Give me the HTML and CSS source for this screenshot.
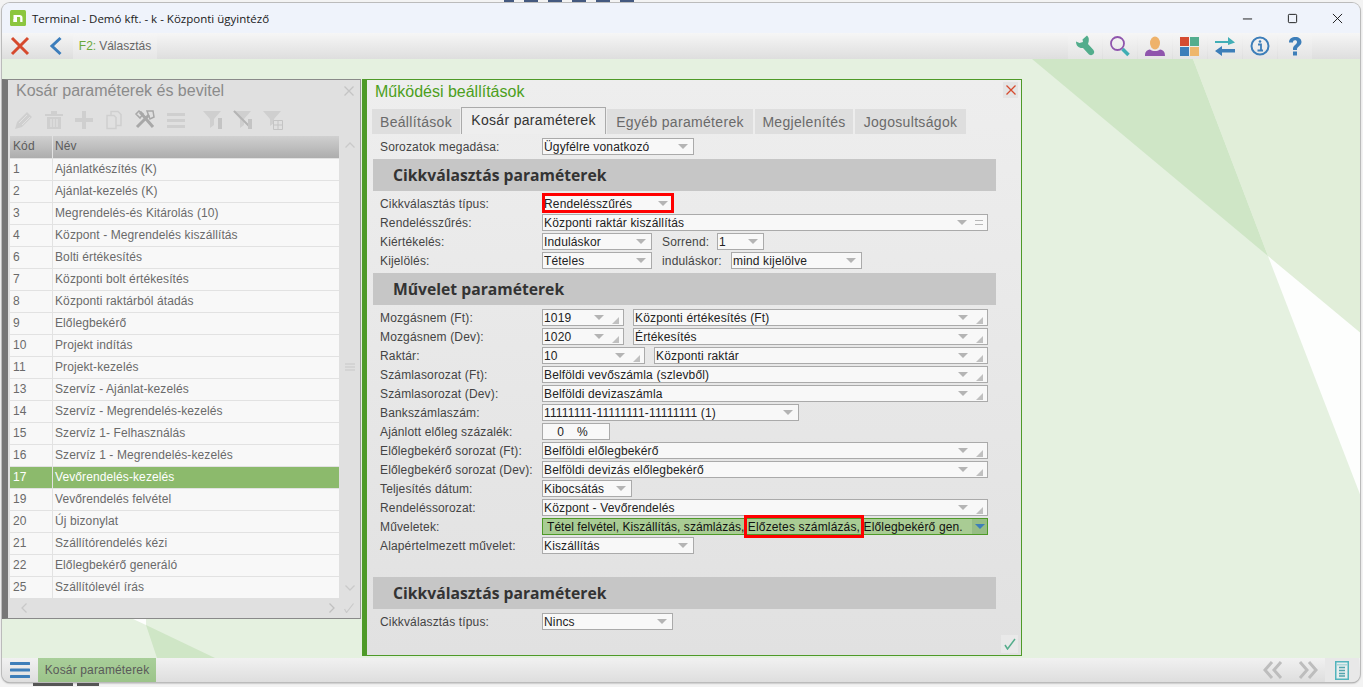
FILE: index.html
```html
<!DOCTYPE html>
<html lang="hu">
<head>
<meta charset="utf-8">
<title>Terminal</title>
<link rel="stylesheet" href="styles.css">
</head>
<body>
<div class="desk-top"><i class="tick t-a"></i><i class="tick t-b"></i><i class="tick"></i><i class="tick"></i><i class="tick"></i><i class="tick"></i></div>
<div class="window">
  <header class="titlebar">
    <svg class="logo" viewBox="0 0 16 16"><rect width="16" height="16" rx="1.5" fill="#8cc63f"/><path d="M3.500 12V5h6.200c1.600 0 2.800 1 2.800 2.800V12h-2.300V8c0-.6-.3-1-1-1H7v5z" fill="#fff"/><rect x="3.500" y="9" width="2" height="3" fill="#fff"/></svg>
    <span class="title-text">Terminal - Demó kft. - k - Központi ügyintéző</span>
    <div class="win-ctrls">
      <svg viewBox="0 0 12 12"><path d="M1 6.500h10" stroke="#111" fill="none"/></svg>
      <svg viewBox="0 0 12 12"><rect x="1.500" y="1.500" width="9" height="9" rx="1" stroke="#111" fill="none"/></svg>
      <svg viewBox="0 0 12 12"><path d="M1 1l10 10M11 1L1 11" stroke="#111" fill="none"/></svg>
    </div>
  </header>
  <nav class="toolbar">
    <button class="tb-btn tb-close"><svg viewBox="0 0 20 20" width="20" height="20"><path d="M2 2l16 16M18 2L2 18" stroke="#d64a2e" stroke-width="3" fill="none"/></svg></button>
    <button class="tb-btn tb-back"><svg viewBox="0 0 14 20" width="14" height="20"><path d="M11.500 2L3 10l8.500 8" stroke="#3d7ebc" stroke-width="3" fill="none"/></svg></button>
    <button class="tb-btn tb-f2"><span class="f2-key">F2:</span> Választás</button>
    <div class="tb-right">
      <button class="tb-icon"><svg viewBox="0 0 22 22" width="22" height="22"><path d="M13 .5L8.500 4.500 9 7 5.500 8 2 6.500C2 11 5 13.500 9 13l6 6.500q2.500 1.500 4.500-.5 1.500-2 0-4L14 9c1.500-4 1-7-1-8.500z" fill="#52ad8c"/></svg></button>
      <button class="tb-icon"><svg viewBox="0 0 22 22" width="22" height="22"><circle cx="8.500" cy="8.500" r="6.500" fill="none" stroke="#8f55ad" stroke-width="1.800"/><path d="M13.500 14l6 6" stroke="#3eaeb4" stroke-width="3.500"/></svg></button>
      <button class="tb-icon"><svg viewBox="0 0 22 22" width="22" height="22"><ellipse cx="11" cy="8" rx="5" ry="6.500" fill="#eeb26a"/><path d="M1 21c0-4 1.500-6 5-6.500 3 2 7 2 10 0 3.500.5 5 2.500 5 6.500z" fill="#8f55ad"/></svg></button>
      <button class="tb-icon"><svg viewBox="0 0 22 22" width="22" height="22"><rect x="1" y="2" width="9" height="9" fill="#d54b30"/><rect x="11" y="2" width="9" height="9" fill="#54ad8e"/><rect x="1" y="12" width="9" height="9" fill="#3d7eb9"/><rect x="11" y="12" width="9" height="9" fill="#eeb66c"/></svg></button>
      <button class="tb-icon"><svg viewBox="0 0 22 22" width="22" height="22"><path d="M1 6h13V2l7 5.500-7 2.500V8H1z" fill="#41aeb6"/><path d="M21 14H8v-3L1 16l7 5v-3.500h13z" fill="#3d7eb9"/></svg></button>
      <button class="tb-icon"><svg viewBox="0 0 22 22" width="22" height="22"><circle cx="11" cy="11" r="8.500" fill="none" stroke="#3d7eb9" stroke-width="2"/><path d="M9 9.500h3V15M8.500 15.500h5.500" stroke="#3d7eb9" stroke-width="1.800" fill="none"/><circle cx="11" cy="6.500" r="1.300" fill="#3d7eb9"/></svg></button>
      <button class="tb-icon"><svg viewBox="0 0 22 22" width="22" height="22"><path d="M5 7.500C5 3.500 8 2 11.500 2 15 2 17.500 4 17.500 7c0 4-5 4.500-4.500 8H9c-.5-5 4-5 4-8 0-1.200-.7-1.800-2-1.800S9 6 9 7.500z" fill="#3d7eb9"/><rect x="9" y="16.500" width="4" height="4" fill="#3d7eb9"/></svg></button>
    </div>
  </nav>
  <main class="content">
    <svg class="wallpaper" viewBox="0 0 1363 687" preserveAspectRatio="none">
      <polygon points="1032,59 1193,59 1268,256" fill="#cfe6c6"/>
      <polygon points="1193,59 1363,59 1363,335 1268,256" fill="#e1eed9"/>
      <polygon points="1268,256 1363,335 1363,502" fill="#fdfefd"/>
      <polygon points="133,619 146,619 146,625" fill="#fdfefd"/>
      <polygon points="146,625 215,658 157,658" fill="#cfe6c6"/>
    </svg>

    <section class="list-panel">
      <div class="lp-title"><span>Kosár paraméterek és bevitel</span>
        <svg class="lp-x" viewBox="0 0 10 10" width="10" height="10"><path d="M.5.500l9 9M9.500.500l-9 9" stroke="#c4c4c4" stroke-width="1.300"/></svg>
      </div>
      <div class="lp-tools">
        <svg viewBox="0 0 20 20" width="20" height="20"><path d="M1 19l2-7L13 2l5 5L8 17z" fill="#cfcfcf"/><path d="M5 13l8-8M8 15l8-8" stroke="#e0e0e0"/></svg>
        <svg viewBox="0 0 20 20" width="20" height="20"><path d="M1 4h18v2H1zM7 1h6v3H7z" fill="#cfcfcf"/><path d="M3 7h14v12H3z" fill="#cfcfcf"/><path d="M7 9v8M10 9v8M13 9v8" stroke="#e0e0e0" stroke-width="1.300"/></svg>
        <svg viewBox="0 0 20 20" width="20" height="20"><path d="M8 1h4v7h7v4h-7v7H8v-7H1V8h7z" fill="#cfcfcf"/></svg>
        <svg viewBox="0 0 20 20" width="20" height="20"><path d="M7 1.500h7l3 3v11H7z" fill="none" stroke="#cfcfcf" stroke-width="1.500"/><path d="M3 5.500h7l2 2v11H3z" fill="#e0e0e0" stroke="#cfcfcf" stroke-width="1.500"/></svg>
        <svg viewBox="0 0 22 22" width="22" height="22"><path d="M3 18L15 6M6 3l13 15" stroke="#a8a8a8" stroke-width="3" fill="none"/><path d="M2 5l3-3 4 3-3 4zM13 2h6l1 6-4 2z" fill="none" stroke="#a8a8a8" stroke-width="1.500"/></svg>
        <svg viewBox="0 0 20 20" width="20" height="20"><path d="M1 3h18v3H1zM1 9h18v3H1zM1 15h18v3H1z" fill="#cfcfcf"/></svg>
        <svg class="tool-gap" viewBox="0 0 20 20" width="20" height="20"><path d="M0 1h18l-7 8v6l-4 3V9z" fill="#cfcfcf"/><path d="M15 8v11h4V8z" fill="#c4c4c4"/></svg>
        <svg viewBox="0 0 20 20" width="20" height="20"><path d="M0 1h18l-7 8v6l-4 3V9z" fill="#cfcfcf"/><path d="M1 1l17 17" stroke="#b4b4b4" stroke-width="2"/><path d="M15 9v10h4V9z" fill="#c4c4c4"/></svg>
        <svg viewBox="0 0 20 20" width="20" height="20"><path d="M0 1h18l-7 8v4l-4 3V9z" fill="#cfcfcf"/><path d="M10.500 10.500h9v9h-9zM15 11v8M11 15h8" fill="#e0e0e0" stroke="#c4c4c4"/></svg>
      </div>
      <div class="lp-body">
        <div class="table">
          <div class="t-head"><span>Kód</span><span>Név</span></div>
          <div class="t-row"><span>1</span><span>Ajánlatkészítés (K)</span></div>
          <div class="t-row"><span>2</span><span>Ajánlat-kezelés (K)</span></div>
          <div class="t-row"><span>3</span><span>Megrendelés-és Kitárolás (10)</span></div>
          <div class="t-row"><span>4</span><span>Központ - Megrendelés kiszállítás</span></div>
          <div class="t-row"><span>6</span><span>Bolti értékesítés</span></div>
          <div class="t-row"><span>7</span><span>Központi bolt értékesítés</span></div>
          <div class="t-row"><span>8</span><span>Központi raktárból átadás</span></div>
          <div class="t-row"><span>9</span><span>Előlegbekérő</span></div>
          <div class="t-row"><span>10</span><span>Projekt indítás</span></div>
          <div class="t-row"><span>11</span><span>Projekt-kezelés</span></div>
          <div class="t-row"><span>13</span><span>Szervíz - Ajánlat-kezelés</span></div>
          <div class="t-row"><span>14</span><span>Szervíz - Megrendelés-kezelés</span></div>
          <div class="t-row"><span>15</span><span>Szervíz 1- Felhasználás</span></div>
          <div class="t-row"><span>16</span><span>Szervíz 1 - Megrendelés-kezelés</span></div>
          <div class="t-row t-sel"><span>17</span><span>Vevőrendelés-kezelés</span></div>
          <div class="t-row"><span>19</span><span>Vevőrendelés felvétel</span></div>
          <div class="t-row"><span>20</span><span>Új bizonylat</span></div>
          <div class="t-row"><span>21</span><span>Szállítórendelés kézi</span></div>
          <div class="t-row"><span>22</span><span>Előlegbekérő generáló</span></div>
          <div class="t-row"><span>25</span><span>Szállítólevél írás</span></div>
        </div>
        <div class="v-scroll">
          <svg viewBox="0 0 10 6" width="10" height="6"><path d="M.5 5.500L5 1l4.500 4.500" stroke="#cacaca" stroke-width="1.300" fill="none"/></svg>
          <svg viewBox="0 0 10 8" width="10" height="8"><path d="M0 1h10M0 4h10M0 7h10" stroke="#c8c8c8"/></svg>
          <svg viewBox="0 0 10 6" width="10" height="6"><path d="M.5.500L5 5 9.500.500" stroke="#cacaca" stroke-width="1.300" fill="none"/></svg>
        </div>
      </div>
      <div class="lp-foot">
        <svg viewBox="0 0 6 10" width="6" height="10"><path d="M5.500.500L1 5l4.500 4.500" stroke="#c8c8c8" stroke-width="1.300" fill="none"/></svg>
        <svg viewBox="0 0 6 10" width="6" height="10"><path d="M.5.500L5 5 .5 9.500" stroke="#c0c0c0" stroke-width="1.300" fill="none"/></svg>
        <svg viewBox="0 0 10 10" width="10" height="10"><path d="M.5 6l2 3.500L9.500.500" stroke="#cacaca" stroke-width="1.200" fill="none"/></svg>
      </div>
    </section>

    <section class="form-panel">
      <div class="fp-head">
        <h1 class="fp-title">Működési beállítások</h1>
        <button class="fp-close"><svg viewBox="0 0 10 10" width="10" height="10"><path d="M.5.500l9 9M9.500.500l-9 9" stroke="#d64a2e" stroke-width="1.300"/></svg></button>
      </div>
      <div class="tabs">
        <div class="tab tab-a">Beállítások</div>
        <div class="tab tab-on">Kosár paraméterek</div>
        <div class="tab tab-c">Egyéb paraméterek</div>
        <div class="tab tab-d">Megjelenítés</div>
        <div class="tab tab-e">Jogosultságok</div>
      </div>
      <div class="form">
        <div class="row"><label>Sorozatok megadása:</label><div class="sel w152"><span class="val">Ügyfélre vonatkozó</span><i class="caret"></i></div></div>
        <h2 class="sect">Cikkválasztás paraméterek</h2>
        <div class="row"><label>Cikkválasztás típus:</label><div class="sel w132 marked"><span class="val">Rendelésszűrés</span><i class="caret"></i></div></div>
        <div class="row"><label>Rendelésszűrés:</label><div class="sel grow"><span class="val">Központi raktár kiszállítás</span><i class="caret"></i><i class="eq"></i></div></div>
        <div class="row"><label>Kiértékelés:</label><div class="sel w110"><span class="val">Induláskor</span><i class="caret"></i></div><span class="sub s55">Sorrend:</span><div class="sel w47"><span class="val">1</span><i class="caret"></i></div></div>
        <div class="row"><label>Kijelölés:</label><div class="sel w110"><span class="val">Tételes</span><i class="caret"></i></div><span class="sub s69">induláskor:</span><div class="sel w131"><span class="val">mind kijelölve</span><i class="caret"></i></div></div>
        <h2 class="sect">Művelet paraméterek</h2>
        <div class="row"><label>Mozgásnem (Ft):</label><div class="sel w82"><span class="val">1019</span><i class="caret"></i><i class="grip"></i></div><div class="sel grow ml9"><span class="val">Központi értékesítés (Ft)</span><i class="caret"></i><i class="grip"></i></div></div>
        <div class="row"><label>Mozgásnem (Dev):</label><div class="sel w82"><span class="val">1020</span><i class="caret"></i><i class="grip"></i></div><div class="sel grow ml9"><span class="val">Értékesítés</span><i class="caret"></i><i class="grip"></i></div></div>
        <div class="row"><label>Raktár:</label><div class="sel w103"><span class="val">10</span><i class="caret"></i><i class="grip"></i></div><div class="sel grow ml9"><span class="val">Központi raktár</span><i class="caret"></i><i class="grip"></i></div></div>
        <div class="row"><label>Számlasorozat (Ft):</label><div class="sel grow"><span class="val">Belföldi vevőszámla (szlevből)</span><i class="caret"></i><i class="grip"></i></div></div>
        <div class="row"><label>Számlasorozat (Dev):</label><div class="sel grow"><span class="val">Belföldi devizaszámla</span><i class="caret"></i><i class="grip"></i></div></div>
        <div class="row"><label>Bankszámlaszám:</label><div class="sel w257"><span class="val">11111111-11111111-11111111 (1)</span><i class="caret"></i></div></div>
        <div class="row"><label>Ajánlott előleg százalék:</label><div class="sel w68 pct"><span class="num">0</span><span>%</span></div></div>
        <div class="row"><label>Előlegbekérő sorozat (Ft):</label><div class="sel grow"><span class="val">Belföldi előlegbekérő</span><i class="caret"></i><i class="grip"></i></div></div>
        <div class="row"><label>Előlegbekérő sorozat (Dev):</label><div class="sel grow"><span class="val">Belföldi devizás előlegbekérő</span><i class="caret"></i><i class="grip"></i></div></div>
        <div class="row"><label>Teljesítés dátum:</label><div class="sel w90"><span class="val">Kibocsátás</span><i class="caret"></i></div></div>
        <div class="row"><label>Rendeléssorozat:</label><div class="sel grow"><span class="val">Központ - Vevőrendelés</span><i class="caret"></i><i class="grip"></i></div></div>
        <div class="row"><label>Műveletek:</label><div class="sel grow multi"><span class="val"><span class="tok1">Tétel felvétel, Kiszállítás, számlázás,</span> <span class="tok-mark">Előzetes számlázás,</span> <span class="tok3">Előlegbekérő gen.</span></span><i class="caret-blue"></i></div></div>
        <div class="row"><label>Alapértelmezett művelet:</label><div class="sel w152"><span class="val">Kiszállítás</span><i class="caret"></i></div></div>
        <div class="spacer"></div>
        <h2 class="sect">Cikkválasztás paraméterek</h2>
        <div class="row"><label>Cikkválasztás típus:</label><div class="sel w131"><span class="val">Nincs</span><i class="caret"></i></div></div>
      </div>
      <button class="fp-ok"><svg viewBox="0 0 12 12" width="12" height="12"><path d="M1 7l2.500 4L11 1" stroke="#55ad8c" stroke-width="1.500" fill="none"/></svg></button>
    </section>
  </main>
  <footer class="bottombar">
    <button class="bb-menu"><svg viewBox="0 0 20 16" width="20" height="16"><path d="M1 0h18a1 1 0 0 1 0 3H1a1 1 0 0 1 0-3zM1 6.500h18a1 1 0 0 1 0 3H1a1 1 0 0 1 0-3zM1 13h18a1 1 0 0 1 0 3H1a1 1 0 0 1 0-3z" fill="#3d7eb9"/></svg></button>
    <div class="bb-tab">Kosár paraméterek</div>
    <div class="bb-right">
      <svg viewBox="0 0 20 18" width="20" height="18"><path d="M9 1L2 9l7 8M18 1l-7 8 7 8" stroke="#bdbdbd" stroke-width="3" fill="none"/></svg>
      <svg viewBox="0 0 20 18" width="20" height="18"><path d="M2 1l7 8-7 8M11 1l7 8-7 8" stroke="#bdbdbd" stroke-width="3" fill="none"/></svg>
      <button class="bb-doc"><svg viewBox="0 0 14 19" width="14" height="19"><rect width="14" height="19" fill="#52b4bc"/><rect x="1.500" y="1.500" width="11" height="16" fill="#e6eeee"/><path d="M2 3h10v1.500H2z" fill="#52b4bc" opacity=".4"/><path d="M4 6.500h6M4 9.500h6M4 12.500h6M4 15h6" stroke="#52a4ac" stroke-width="1.300"/></svg></button>
    </div>
  </footer>
</div>
<div class="desk-bottom"><i class="tick-b"></i><i class="tick-b short"></i></div>
</body>
</html>
```

FILE: styles.css
```css
* { box-sizing: border-box; }
html, body { height: 100%; margin: 0; }
body {
  display: flex;
  flex-direction: column;
  overflow: hidden;
  background: #f3f3f3;
  font-family: "Liberation Sans", Arial, sans-serif;
  font-size: 12px;
  color: #333;
}
button { border: 0; padding: 0; background: none; font: inherit; }
h1, h2 { margin: 0; }

.desk-top { height: 3px; overflow: hidden; padding-left: 504px; display: flex; gap: 10px; }
.tick { display: block; width: 14px; height: 2px; background: #44597f; }
.t-a { width: 10px; }
.desk-bottom { height: 5px; overflow: hidden; padding: 1px 0 0 33px; display: flex; gap: 4px; }
.tick-b { display: block; width: 40px; height: 3px; background: #555; }
.short { width: 22px; }

.window {
  flex: 1;
  min-height: 0;
  margin: 0 3px 0 2px;
  border-radius: 8px;
  overflow: hidden;
  display: flex;
  flex-direction: column;
  box-shadow: 0 0 0 1px #bbb, 0 1px 2px #777;
}

.titlebar { height: 30px; background: #eff3fb; display: flex; align-items: center; padding-left: 8px; }
.logo { width: 16px; height: 16px; }
.title-text { margin-left: 6px; font-family: "Open Sans", sans-serif; font-size: 11.5px; color: #1a1a1a; }
.win-ctrls { margin-left: auto; display: flex; gap: 34px; padding-right: 17px; }
.win-ctrls svg { width: 11px; height: 11px; }

.toolbar {
  height: 26px;
  display: flex;
  align-items: stretch;
  background: linear-gradient(#f6f6f6, #dedede);
}
.tb-btn { display: flex; align-items: center; justify-content: center; }
.tb-close { width: 36px; }
.tb-back { width: 35px; }
.tb-f2 { width: 84px; color: #666; background: linear-gradient(#f6f6f6, #e6e6e6); font-size: 12px; gap: 3px; }
.f2-key { color: #6aa83c; }
.tb-right { margin-left: auto; display: flex; gap: 1px; padding-right: 48px; }
.tb-icon { width: 34px; display: flex; align-items: center; justify-content: center; background: linear-gradient(#f6f6f6, #e4e4e4); }

.content {
  position: relative;
  flex: 1;
  min-height: 0;
  background: #e5f1e0;
  display: flex;
  align-items: flex-start;
  gap: 1px;
  padding-top: 20px;
}
.wallpaper { position: absolute; left: -2px; top: -59px; width: 1363px; height: 687px; }

.list-panel {
  position: relative;
  width: 359px;
  height: 540px;
  background: #e0e0e0;
  border-left: 6px solid #777;
  border-top: 1px solid #8a8a8a;
  border-right: 1px solid #9a9a9a;
  border-bottom: 1px solid #8a8a8a;
  color: #666;
}
.lp-title {
  height: 24px;
  padding: 0 0 2px 8px;
  font-size: 16px;
  line-height: 22px;
  color: #8b8b8b;
  display: flex;
  justify-content: space-between;
  align-items: center;
}
.lp-x { margin-right: 6px; }
.lp-tools { height: 32px; padding-left: 6px; display: flex; align-items: center; gap: 10px; }
.tool-gap { margin-left: 7px; }
.lp-body { display: flex; padding-left: 2px; }
.table { width: 329px; }
.t-head, .t-row { display: grid; grid-template-columns: 42px 1fr; height: 22px; line-height: 21px; letter-spacing: .1px; }
.t-head span, .t-row span { padding-left: 3px; }
.t-head { background: linear-gradient(#d0d0d0, #adadad); color: #5c5c5c; }
.t-head span + span { border-left: 1px solid #e2e2e2; padding-left: 2px; }
.t-row { background: #f8f8f8; border-top: 1px solid #e2e2e2; color: #6a6a6a; }
.t-row span + span { border-left: 1px solid #e2e2e2; padding-left: 2px; }
.t-sel { background: #8cba6c; color: #fff; }
.v-scroll { width: 21px; display: flex; flex-direction: column; justify-content: space-between; align-items: center; padding: 6px 0 7px; }
.lp-foot { height: 20px; display: flex; align-items: center; padding-left: 13px; }
.lp-foot svg:nth-child(2) { margin-left: auto; margin-right: 9px; }
.lp-foot svg:nth-child(3) { margin-right: 6px; }

.form-panel {
  position: relative;
  width: 660px;
  height: 577px;
  background: linear-gradient(#eeeeee, #e1e1e1);
  border: 1px solid #4e9a28;
  border-left-width: 5px;
}
.fp-head { height: 27px; display: flex; justify-content: space-between; align-items: flex-start; }
.fp-title { font-size: 16px; font-weight: 400; color: #4c9f20; padding: 2px 0 0 8px; line-height: 20px; }
.fp-close { width: 15px; height: 16px; margin: 2px 3px 0 0; background: #e4e4e4; display: flex; align-items: center; justify-content: center; }
.tabs { display: flex; height: 27px; align-items: flex-end; padding-left: 5px; gap: 2px; }
.tab { height: 25px; background: #dedede; color: #6a6a6a; font-size: 14px; line-height: 26px; text-align: center; letter-spacing: .32px; }
.tab-a { width: 88px; margin-right: -1px; }
.tab-on { width: 145px; height: 27px; background: #eeeeee; border: 1px solid #aaa; border-bottom: 0; color: #333; line-height: 25px; margin-right: -1px; }
.tab-c { width: 146px; }
.tab-d { width: 98px; }
.tab-e { width: 111px; }

.form { padding: 4px 0 0 6px; display: flex; flex-direction: column; gap: 2px; }
.row { height: 17px; display: flex; align-items: center; padding-left: 7px; width: 615px; }
.row label { width: 162px; flex: none; color: #444; letter-spacing: .15px; }
.sect {
  height: 32px;
  width: 623px;
  margin: 2px 0;
  padding-left: 20px;
  background: #c6c6c6;
  font-family: "Open Sans", sans-serif;
  font-size: 15.7px;
  font-weight: 700;
  line-height: 32px;
  color: #333;
}
.spacer { height: 17px; }
.sel {
  position: relative;
  height: 17px;
  flex: none;
  display: flex;
  align-items: center;
  background: #f8f8f8;
  border: 1px solid #aaa;
  padding: 0 4px 0 1px;
  color: #222;
  letter-spacing: .15px;
}
.val { flex: 1; white-space: nowrap; overflow: hidden; }
.grow { flex: 1; }
.w47 { width: 47px; }
.w68 { width: 68px; }
.w82 { width: 82px; }
.w90 { width: 90px; }
.w103 { width: 103px; }
.w110 { width: 110px; }
.w131 { width: 131px; }
.w132 { width: 132px; }
.w152 { width: 152px; }
.w257 { width: 257px; }
.ml9 { margin-left: 9px; }
.sub { color: #444; letter-spacing: .15px; padding-left: 10px; flex: none; }
.s55 { width: 65px; }
.s69 { width: 79px; }
.caret { width: 0; height: 0; flex: none; margin-right: 1px; border: 4px solid transparent; border-top: 5px solid #b4b4b4; border-bottom: 0; border-left-width: 5px; border-right-width: 5px; }
.grip { width: 0; height: 0; flex: none; margin: 5px 0 0 7px; border-bottom: 7px solid #c0c0c0; border-left: 7px solid transparent; }
.eq { width: 8px; height: 5px; flex: none; margin-left: 7px; border-top: 1px solid #b8b8b8; border-bottom: 1px solid #b8b8b8; }
.marked::after {
  content: "";
  position: absolute;
  left: -1px;
  right: -1px;
  top: -3px;
  bottom: -2px;
  border: 3px solid #f00;
  pointer-events: none;
}
.pct { justify-content: flex-start; }
.num { width: 20px; text-align: right; margin-right: 13px; }
.multi { background: #a9cc94; border-color: #4e9a28; padding: 0 0 0 4px; color: #111; }
.multi .val { overflow: visible; }
.tok1 { letter-spacing: .05px; }
.tok-mark { position: relative; }
.tok-mark::after {
  content: "";
  position: absolute;
  left: -4px;
  right: -4px;
  top: -5px;
  bottom: -4px;
  border: 3px solid #f00;
}
.caret-blue { position: relative; width: 15px; height: 15px; flex: none; background: #97bd85; }
.caret-blue::after {
  content: "";
  position: absolute;
  left: 3px;
  top: 5px;
  border-top: 5px solid #3d7eb9;
  border-left: 5px solid transparent;
  border-right: 5px solid transparent;
}
.fp-ok { position: absolute; right: 3px; bottom: 2px; width: 17px; height: 18px; background: #e9e9e9; display: flex; align-items: center; justify-content: center; }

.bottombar {
  height: 24px;
  display: flex;
  align-items: stretch;
  background: linear-gradient(#f1f1f1, #dedede);
}
.bb-menu { width: 36px; padding-left: 8px; display: flex; align-items: center; }
.bb-tab { width: 118px; background: linear-gradient(#a9cf9a, #9cc48a); color: #5a5a5a; line-height: 24px; text-align: center; letter-spacing: .15px; }
.bb-right { margin-left: auto; display: flex; align-items: center; gap: 15px; padding-right: 1px; }
.bb-doc { width: 34px; height: 24px; background: #e8e8e8; display: flex; align-items: center; justify-content: center; margin-left: -8px; }
```
